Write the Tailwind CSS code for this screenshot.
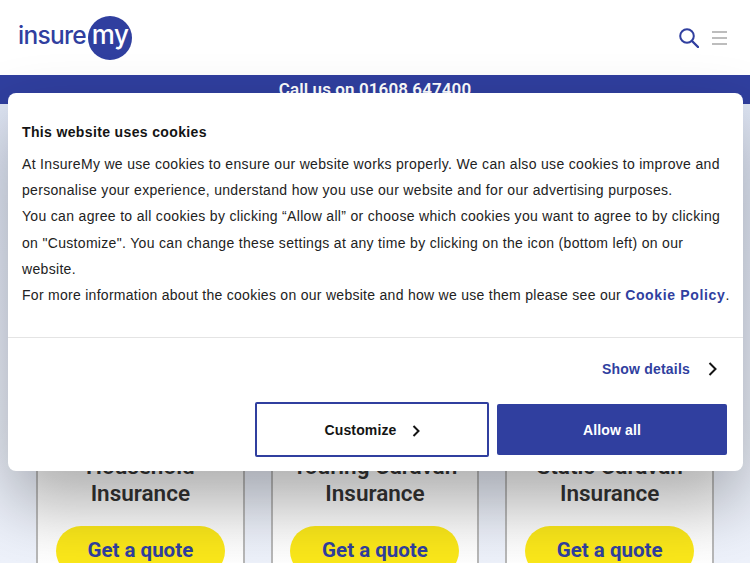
<!DOCTYPE html>
<html lang="en">
<head>
<meta charset="UTF-8">
<title>InsureMy</title>
<script src="https://cdn.jsdelivr.net/npm/@tailwindcss/browser@4"></script>
</head>
<body class="relative h-[563px] w-[750px] overflow-hidden bg-white font-['Roboto',sans-serif]">
  <!-- Header -->
  <header class="flex h-[75px] items-center justify-between pl-[18px] pr-[23px]">
    <div class="flex items-center">
      <span class="mb-[5px] font-['Inter',sans-serif] text-[24.5px] font-medium leading-none tracking-[-0.7px] text-[#303f9f]">insure</span>
      <span class="ml-[2px] flex h-[44px] w-[44px] items-center justify-center rounded-full bg-[#303f9f] pb-[5px] font-['Inter',sans-serif] text-[26px] font-medium leading-none tracking-[-0.6px] text-white">my</span>
    </div>
    <div class="flex items-center gap-[13px]">
      <svg width="20" height="20" viewBox="0 0 20 20" fill="none" stroke="#303f9f" stroke-width="2"><circle cx="8" cy="8" r="6.8"/><path d="M13 13l6 6" stroke-linecap="round" stroke-width="2.4"/></svg>
      <div class="flex w-[15px] flex-col gap-[4px]">
        <div class="h-[2px] bg-[#bdbdbd]"></div>
        <div class="h-[2px] bg-[#bdbdbd]"></div>
        <div class="h-[2px] bg-[#bdbdbd]"></div>
      </div>
    </div>
  </header>

  <!-- Phone bar -->
  <div class="h-[29px] bg-[#303f9f] text-center text-[17px] font-semibold leading-[29px] tracking-[0.1px] text-white">Call us on 01608 647400</div>

  <!-- Hero with cards -->
  <main class="grid h-[459px] grid-cols-3 items-end gap-[26px] bg-gradient-to-b from-[#dfe6f5] to-[#eef2fb] px-[36px]">
    <div class="flex h-[300px] flex-col items-center justify-end border-x-2 border-[#b8b8b8] bg-gradient-to-b from-[#e4e4e4] to-white">
      <h2 class="text-center text-[22.5px] font-semibold leading-[27px] text-[#333]">Household<br>Insurance</h2>
      <a class="mt-[19px] mb-[-13px] flex h-[50px] w-[169px] items-center justify-center rounded-[25px] bg-[#fbe81a] pb-[1px] text-[20.5px] font-bold text-[#303f9f]">Get a quote</a>
    </div>
    <div class="flex h-[300px] flex-col items-center justify-end border-x-2 border-[#b8b8b8] bg-gradient-to-b from-[#e4e4e4] to-white">
      <h2 class="text-center text-[22.5px] font-semibold leading-[27px] text-[#333]">Touring Caravan<br>Insurance</h2>
      <a class="mt-[19px] mb-[-13px] flex h-[50px] w-[169px] items-center justify-center rounded-[25px] bg-[#fbe81a] pb-[1px] text-[20.5px] font-bold text-[#303f9f]">Get a quote</a>
    </div>
    <div class="flex h-[300px] flex-col items-center justify-end border-x-2 border-[#b8b8b8] bg-gradient-to-b from-[#e4e4e4] to-white">
      <h2 class="text-center text-[22.5px] font-semibold leading-[27px] text-[#333]">Static Caravan<br>Insurance</h2>
      <a class="mt-[19px] mb-[-13px] flex h-[50px] w-[169px] items-center justify-center rounded-[25px] bg-[#fbe81a] pb-[1px] text-[20.5px] font-bold text-[#303f9f]">Get a quote</a>
    </div>
  </main>

  <!-- Cookie dialog -->
  <div class="absolute left-[8px] top-[93px] h-[378px] w-[735px] rounded-[8px] bg-white font-['Liberation_Sans',sans-serif] text-[#141414] shadow-[0_32px_68px_rgba(0,0,0,0.3)]">
    <div class="h-[245px] border-b border-[#e4e4e4] px-[14px] pt-[27px]">
      <h1 class="text-[14px] font-bold leading-[24px] tracking-[0.36px]">This website uses cookies</h1>
      <p class="mt-[7px] text-[14px] leading-[26.2px] tracking-[0.32px] text-[#222]">At InsureMy we use cookies to ensure our website works properly. We can also use cookies to improve and personalise your experience, understand how you use our website and for our advertising purposes.<br>You can agree to all cookies by clicking “Allow all” or choose which cookies you want to agree to by clicking on "Customize". You can change these settings at any time by clicking on the icon (bottom left) on our website.<br><span class="whitespace-nowrap tracking-[0.28px]">For more information about the cookies on our website and how we use them please see our <a class="font-bold tracking-[0.65px] text-[#303f9f]">Cookie Policy</a>.</span></p>
    </div>
    <div class="flex h-[64px] items-center justify-end pb-[2px] pr-[26px]">
      <span class="text-[14px] font-bold tracking-[0.2px] text-[#303f9f]">Show details</span>
      <svg class="ml-[18px]" width="9" height="14" viewBox="0 0 9 14" fill="none" stroke="#141414" stroke-width="2"><path d="M1.5 1l6 6-6 6"/></svg>
    </div>
    <div class="flex gap-[8px] pl-[247px] pr-[16px]">
      <button class="flex h-[55px] w-[234px] items-center justify-center rounded-[2px] border-2 border-[#303f9f] bg-white pt-[1px] text-[14px] font-bold tracking-[0.15px]">
        Customize
        <svg class="ml-[15px] mt-[1px]" width="8" height="12" viewBox="0 0 8 12" fill="none" stroke="#141414" stroke-width="2"><path d="M1.5 1l5 5-5 5"/></svg>
      </button>
      <button class="mt-[2px] h-[51px] w-[230px] rounded-[2px] bg-[#303f9f] pt-[1px] text-[14px] font-bold tracking-[0.15px] text-white">Allow all</button>
    </div>
  </div>
</body>
</html>
